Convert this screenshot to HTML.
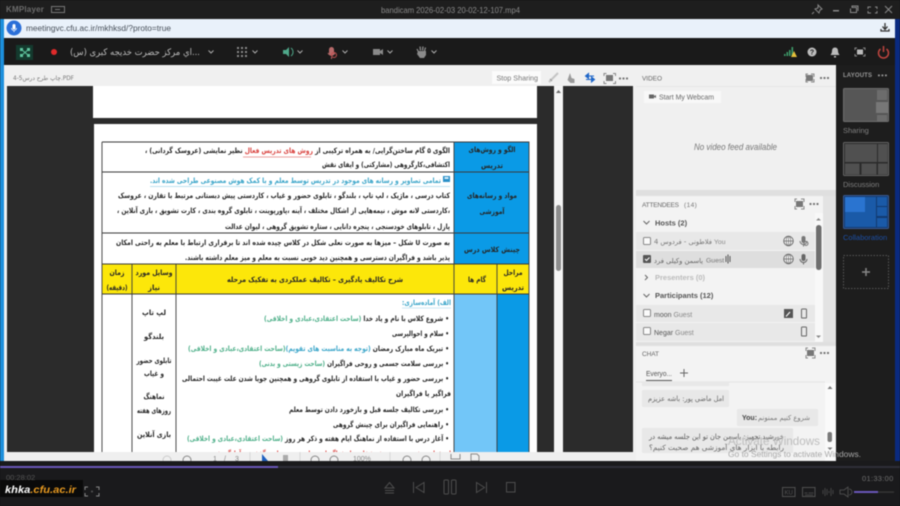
<!DOCTYPE html>
<html><head><meta charset="utf-8"><style>
html,body{margin:0;padding:0;background:#151515;width:900px;height:506px;overflow:hidden}
svg{display:block;filter:blur(.45px)}
text{font-family:"Liberation Sans",sans-serif}
.a{font-family:"DejaVu Sans",sans-serif;direction:rtl;font-size:7.4px;fill:#262626}
.b,.d{font-weight:bold}
.m{text-anchor:middle}
.h{font-size:6.5px;fill:#666}
.g{fill:#4fb08a}.t{fill:#3aa5c9}.r{fill:#d9413d}
.ic{fill:none;stroke:#888;stroke-width:1}
</style></head><body>
<svg width="900" height="506" viewBox="0 0 900 506" xmlns="http://www.w3.org/2000/svg">
<rect width="900" height="506" fill="#1a1a1c"/>
<!-- title bar -->
<rect y="1" width="900" height="18" fill="#1e1e1e"/>
<text x="6" y="12" font-size="8" letter-spacing=".2" style="font-weight:bold" fill="#6c6c6c">KMPlayer</text>
<rect x="51.500" y="6.500" width="13" height="6" fill="none" stroke="#777"/><rect x="55" y="9" width="5" height="1" fill="#777"/>
<text x="381" y="13" font-size="8.500" fill="#8a8a8a" textLength="139" lengthAdjust="spacingAndGlyphs">bandicam 2026-02-03 20-02-12-107.mp4</text>
<path d="M818 5l4 4-2 1-1 3-4-4 3-1zM814 12l-2 2" class="ic" stroke="#777"/>
<rect x="833" y="10" width="6" height="1.500" fill="#888"/>
<path d="M851.500 7.500h5v5h-6v-4M852 7v-1h6v5" class="ic"/>
<path d="M868 9V7h3M875 7h2v2M868 11v2h3M875 13h2v-2" class="ic"/>
<path d="M885 6l7 7M892 6l-7 7" class="ic" stroke="#666"/>
<!-- side strips -->
<rect y="19" width="4" height="442" fill="#1c8fdc"/>
<rect x="895" y="19" width="5" height="442" fill="#0a2a80"/>
<!-- url bar -->
<rect x="4" y="19" width="891" height="19" fill="#e9f1fa"/>
<circle cx="14" cy="28" r="7.500" fill="#2b6fd8"/><rect x="12.500" y="24" width="3" height="5.500" rx="1.500" fill="#fff"/><path d="M11.500 28a2.500 2.500 0 005 0M14 31v1" fill="none" stroke="#fff" stroke-width=".8"/>
<text x="26" y="31" font-size="8" fill="#48505a" textLength="145" lengthAdjust="spacingAndGlyphs">meetingvc.cfu.ac.ir/mkhksd/?proto=true</text>
<path d="M885 23v6M882.500 26.500l2.500 3 2.500-3M881 29v2h8v-2" fill="none" stroke="#333" stroke-width="1.300"/>
<!-- connect bar -->
<rect x="4" y="38" width="891" height="27" fill="#1a1a1a"/>
<rect x="16" y="45" width="17" height="15" fill="#143a2e"/>
<path d="M21 49l8 7M29 49l-8 7" stroke="#5fc49e" stroke-width="1"/><rect x="20" y="48" width="3" height="3" fill="#5fc49e"/><rect x="27" y="48" width="3" height="3" fill="#5fc49e"/><rect x="20" y="54" width="3" height="3" fill="#5fc49e"/><rect x="27" y="54" width="3" height="3" fill="#5fc49e"/>
<circle cx="54" cy="52" r="3" fill="#e02a2a"/>
<text class="a" x="200" y="55" style="font-size:9px;fill:#bdbdbd" textLength="130" lengthAdjust="spacingAndGlyphs">...اي مركز حضرت خديجه كبرى (س)</text>
<g fill="none" stroke="#aaa" stroke-width="1"><path d="M208.500 50.500l2.500 2.500 2.500-2.500M252.500 50.500l2.500 2.500 2.500-2.500M297.500 50.500l2.500 2.500 2.500-2.500M342.500 50.500l2.500 2.500 2.500-2.500M387.500 50.500l2.500 2.500 2.500-2.500M431.500 50.500l2.500 2.500 2.500-2.500"/></g>
<g fill="#8a8a8a"><rect x="237" y="47" width="2" height="2"/><rect x="241" y="47" width="2" height="2"/><rect x="245" y="47" width="2" height="2"/><rect x="237" y="51" width="2" height="2"/><rect x="241" y="51" width="2" height="2"/><rect x="245" y="51" width="2" height="2"/><rect x="237" y="55" width="2" height="2"/><rect x="241" y="55" width="2" height="2"/><rect x="245" y="55" width="2" height="2"/></g>
<path d="M283 50h3l3-3v10l-3-3h-3z" fill="#4fa88a"/><path d="M291 48a5 5 0 010 8" fill="none" stroke="#4fa88a" stroke-width="1"/>
<rect x="329" y="47" width="5" height="9" rx="2.500" fill="#b86a6a"/><path d="M328 53a4 4 0 007 0M331.500 57v2" fill="none" stroke="#b86a6a"/><circle cx="334" cy="55" r="2.500" fill="none" stroke="#c05050"/>
<rect x="373" y="49" width="7" height="6" fill="#8a8a8a"/><path d="M380 51l3-2v6l-3-2z" fill="#8a8a8a"/>
<path d="M418.500 52l-1.500-3M420.500 50.500l-.5-4M422.500 50.500l.5-4M424.500 51l1-3.500" stroke="#8a8a8a" stroke-width="1.300" fill="none"/><path d="M418 51h8v4l-2 3h-4l-3-4z" fill="#8a8a8a"/>
<g fill="#3d9c6a"><rect x="784" y="54" width="1.600" height="2"/><rect x="786.500" y="52" width="1.600" height="4"/><rect x="789" y="50" width="1.600" height="6"/><rect x="791.500" y="47" width="1.600" height="9"/></g><path d="M794 51l3 6h-6z" fill="#e6c03a"/>
<circle cx="812" cy="52" r="4.500" fill="#bdbdbd"/><text x="812" y="54.500" font-size="7" text-anchor="middle" style="font-weight:bold" fill="#1a1a1a">?</text>
<path d="M835 47.500c-2 0-3 1.500-3 3.500 0 2-1 3-1.500 4h9c-.5-1-1.500-2-1.500-4 0-2-1-3.500-3-3.500zM834 56h2v1.500h-2z" fill="#bbb"/>
<rect x="857" y="49.500" width="6" height="5" fill="#bbb"/><path d="M855 50v-2h2M863 48h2v2M855 54v2h2M863 56h2v-2" class="ic" stroke="#bbb"/>
<path d="M880.500 49a5 5 0 106 0M883.500 46v6" fill="none" stroke="#c0453f" stroke-width="1.500"/>
<!-- share pod -->
<rect x="4" y="65" width="632" height="396" fill="#f0f0f0"/>
<text class="a" x="13" y="80" style="font-size:5.800px;fill:#777;direction:ltr" textLength="61" lengthAdjust="spacingAndGlyphs">چاپ طرح درس5-4.PDF</text>
<rect x="492" y="71" width="49" height="13" fill="#fbfbfb"/>
<text x="496.500" y="80.500" font-size="7.200" fill="#777">Stop Sharing</text>
<path d="M549 82l9-9" stroke="#c4c4c4" stroke-width="2"/><path d="M550 79l2 2" stroke="#999"/>
<path d="M570 73l1.500 5 3 1v4h-4l-3-3" fill="#9a9a9a"/>
<path d="M588.500 73.500l-3 2.500 3 2.500zM588 76h6" fill="#1e66c8" stroke="#1e66c8" stroke-width="1.100"/>
<path d="M591.500 77l3 2.500-3 2.500zM592 79.500h-6" fill="#1e66c8" stroke="#1e66c8" stroke-width="1.100"/>
<rect x="606" y="75" width="7" height="6" fill="#777"/><path d="M604 76v-2.500h2.500M613 73.500h2.500V76M604 81v2.500h2.500M613 83.500h2.500V81" class="ic"/>
<g fill="#777"><rect x="619" y="77.500" width="2" height="2"/><rect x="622.500" y="77.500" width="2" height="2"/><rect x="626" y="77.500" width="2" height="2"/></g>
<!-- dark area -->
<rect x="7" y="86" width="626" height="366" fill="#2b2b2b"/>
<rect x="93" y="86" width="444" height="32" fill="#fff"/>
<rect x="94" y="124" width="443" height="328" fill="#fff"/>
<rect x="554" y="86" width="9" height="366" fill="#f4f4f4"/>
<path d="M558.500 90l2.500 3h-5z" fill="#666"/><rect x="556" y="205" width="5" height="66" rx="2.500" fill="#8c8c8c"/>
<!-- doc table fills -->
<rect x="454" y="142" width="75" height="122" fill="#0a9ae6"/>
<rect x="102" y="264" width="427" height="30" fill="#fce70a"/>
<rect x="454" y="294" width="43" height="158" fill="#72c6f8"/>
<rect x="497" y="294" width="32" height="158" fill="#0a9ae6"/>
<g stroke="#3a3a3a" stroke-width=".9" fill="none"><path d="M102 142H529V452M102 142V452M102 172H529M102 233H529M102 264H529M102 294H529M454 142V452M497 264V452M176 264V452M132 264V452"/></g>
<!-- doc text -->
<text class="a d" x="450" y="153" textLength="305" lengthAdjust="spacingAndGlyphs">الگوی ۵ گام ساختن‌گرایی/ به همراه ترکیبی از <tspan class="r">روش های تدریس فعال</tspan> نظیر نمایشی (عروسک گردانی) ،</text>
<path d="M311 157H243" stroke="#d9413d" stroke-width=".6"/>
<text class="a d" x="450" y="167" textLength="128" lengthAdjust="spacingAndGlyphs">اکتشافی،کارگروهی (مشارکتی) و ایفای نقش</text>
<rect x="443" y="176" width="7" height="6" fill="#2a90c8"/><rect x="444.500" y="177" width="4" height="2" fill="#d8eefa"/>
<text class="a d" x="441" y="183" style="fill:#3aa5c9" textLength="291" lengthAdjust="spacingAndGlyphs">تمامی تصاویر و رسانه های موجود در تدریس توسط معلم و با کمک هوش مصنوعی طراحی شده اند.</text>
<path d="M150 186.500H450" stroke="#7cc5e0" stroke-width=".5"/>
<text class="a d" x="450" y="198" textLength="332" lengthAdjust="spacingAndGlyphs">کتاب درسی ، ماژیک ، لپ تاپ ، بلندگو ، تابلوی حضور و غیاب ، کاردستی پیش دبستانی مرتبط با تقارن ، عروسک</text>
<text class="a d" x="450" y="213" textLength="333" lengthAdjust="spacingAndGlyphs">،کاردستی لانه موش ، نیمه‌هایی از اشکال مختلف ، آینه ،پاورپوینت ، تابلوی گروه بندی ، کارت تشویق ، بازی آنلاین ،</text>
<text class="a d" x="450" y="229" textLength="225" lengthAdjust="spacingAndGlyphs">پازل ، تابلوهای خودسنجی ، پنجره دانایی ، ستاره تشویق گروهی ، لیوان عدالت</text>
<text class="a d" x="450" y="245" textLength="334" lengthAdjust="spacingAndGlyphs">به صورت U شکل – میزها به صورت نعلی شکل در کلاس چیده شده اند تا برقراری ارتباط با معلم به راحتی امکان</text>
<text class="a d" x="450" y="260" textLength="265" lengthAdjust="spacingAndGlyphs">پذیر باشد و فراگیران دسترسی و همچنین دید خوبی نسبت به معلم و میز معلم داشته باشند.</text>
<g>
<text class="a b m" x="492" y="152" textLength="47" lengthAdjust="spacingAndGlyphs">الگو و روش‌های</text>
<text class="a b m" x="492" y="168" textLength="22" lengthAdjust="spacingAndGlyphs">تدریس</text>
<text class="a b m" x="492" y="198" textLength="50" lengthAdjust="spacingAndGlyphs">مواد و رسانه‌های</text>
<text class="a b m" x="492" y="214" textLength="25" lengthAdjust="spacingAndGlyphs">آموزشی</text>
<text class="a b m" x="492" y="252" textLength="56" lengthAdjust="spacingAndGlyphs">چینش کلاس درس</text>
<text class="a b m" x="513" y="275" textLength="19" lengthAdjust="spacingAndGlyphs">مراحل</text>
<text class="a b m" x="513" y="290" textLength="22" lengthAdjust="spacingAndGlyphs">تدریس</text>
<text class="a b m" x="477" y="282" textLength="18" lengthAdjust="spacingAndGlyphs">گام ها</text>
<text class="a b m" x="315" y="282" textLength="176" lengthAdjust="spacingAndGlyphs">شرح تکالیف یادگیری – تکالیف عملکردی به تفکیک مرحله</text>
<text class="a b m" x="154" y="275" textLength="37" lengthAdjust="spacingAndGlyphs">وسایل مورد</text>
<text class="a b m" x="154" y="290" textLength="12" lengthAdjust="spacingAndGlyphs">نیاز</text>
<text class="a b m" x="117" y="275" textLength="15" lengthAdjust="spacingAndGlyphs">زمان</text>
<text class="a b m" x="117" y="290" textLength="21" lengthAdjust="spacingAndGlyphs">(دقیقه)</text>
<text class="a b m" x="154" y="315" textLength="24" lengthAdjust="spacingAndGlyphs">لپ تاپ</text>
<text class="a b m" x="154" y="339" textLength="20" lengthAdjust="spacingAndGlyphs">بلندگو</text>
<text class="a b m" x="154" y="363" textLength="35" lengthAdjust="spacingAndGlyphs">تابلوی حضور</text>
<text class="a b m" x="154" y="376" textLength="20" lengthAdjust="spacingAndGlyphs">و غیاب</text>
<text class="a b m" x="154" y="399" textLength="21" lengthAdjust="spacingAndGlyphs">نماهنگ</text>
<text class="a b m" x="154" y="413" textLength="34" lengthAdjust="spacingAndGlyphs">روزهای هفته</text>
<text class="a b m" x="154" y="437" textLength="34" lengthAdjust="spacingAndGlyphs">بازی آنلاین</text>
</g>
<text class="a d" x="451" y="305" style="fill:#3aa5c9" textLength="49" lengthAdjust="spacingAndGlyphs">الف) آماده‌سازی:</text>
<path d="M402 308H451" stroke="#9ad2e6" stroke-width=".5"/>
<text class="a d" x="449" y="321" textLength="185" lengthAdjust="spacingAndGlyphs">• شروع کلاس با نام و یاد خدا <tspan class="g">(ساحت اعتقادی،عبادی و اخلاقی)</tspan></text>
<text class="a d" x="449" y="336" textLength="57" lengthAdjust="spacingAndGlyphs">• سلام و احوالپرسی</text>
<text class="a d" x="449" y="351" textLength="261" lengthAdjust="spacingAndGlyphs">• تبریک ماه مبارک رمضان <tspan class="t">(توجه به مناسبت های تقویم)</tspan><tspan class="g">(ساحت اعتقادی،عبادی و اخلاقی)</tspan></text>
<text class="a d" x="449" y="366" textLength="190" lengthAdjust="spacingAndGlyphs">• بررسی سلامت جسمی و روحی فراگیران <tspan class="g">(ساحت زیستی و بدنی)</tspan></text>
<text class="a d" x="449" y="381" textLength="267" lengthAdjust="spacingAndGlyphs">• بررسی حضور و غیاب با استفاده از تابلوی گروهی و همچنین جویا شدن علت غیبت احتمالی</text>
<text class="a d" x="451" y="396" textLength="55" lengthAdjust="spacingAndGlyphs">فراگیر یا فراگیران</text>
<text class="a d" x="449" y="412" textLength="160" lengthAdjust="spacingAndGlyphs">• بررسی تکالیف جلسه قبل و بازخورد دادن توسط معلم</text>
<text class="a d" x="449" y="427" textLength="116" lengthAdjust="spacingAndGlyphs">• راهنمایی فراگیران برای چینش گروهی</text>
<text class="a d" x="449" y="441" textLength="262" lengthAdjust="spacingAndGlyphs">• آغاز درس با استفاده از نماهنگ ایام هفته و ذکر هر روز <tspan class="g">(ساحت اعتقادی،عبادی و اخلاقی)</tspan></text>
<text class="a d" x="451" y="456" style="fill:#d9413d" textLength="245" lengthAdjust="spacingAndGlyphs">ارزشیابی تشخیصی: پرسش شفاهی از فراگیران درباره مبحث جلسه گذشته و آمادگی ذهنی</text>
<!-- pdf toolbar -->
<rect x="4" y="452" width="632" height="9" fill="#efefef"/>
<g class="ic" fill="none" stroke="#999"><circle cx="167" cy="460" r="4" stroke="#ccc"/><circle cx="187" cy="460" r="4"/><circle cx="315" cy="460" r="4"/><circle cx="334" cy="460" r="4"/><circle cx="407" cy="460" r="4"/><circle cx="426" cy="460" r="4"/><path d="M451 454v5h9v-5M471 454h6l2 2v5h-8z"/></g>
<path d="M250 452v9M300 452v9M390 452v9M440 452v9" stroke="#d8d8d8"/>
<text x="213" y="461" font-size="7" fill="#888">1</text><text x="224" y="461" font-size="7" fill="#888">/</text><text x="235" y="461" font-size="7" fill="#888">3</text>
<path d="M262 454l6 7h-6z" fill="#1d5fbf"/><path d="M283 455h5v6h-5z" fill="#aaa"/>
<text x="353" y="461" font-size="7" fill="#888">100%</text>
<!-- video pod -->
<rect x="636" y="65" width="200" height="125" fill="#f0f0f0"/><rect x="636" y="190" width="200" height="6" fill="#dfdfdf"/>
<path d="M636 86.500H836" stroke="#e6e6e6"/>
<text x="642" y="80.500" class="h" textLength="20" lengthAdjust="spacing">VIDEO</text>
<rect x="806" y="75" width="7" height="6" fill="#777"/><path d="M806 77v-3h2M811 74h3v3M806 79v3h2M811 82h3v-3" class="ic"/>
<g fill="#777"><rect x="820" y="77" width="2" height="2"/><rect x="823.500" y="77" width="2" height="2"/><rect x="827" y="77" width="2" height="2"/></g>
<rect x="644" y="91" width="77" height="12" fill="#f8f8f8"/>
<rect x="649" y="94.500" width="5" height="4" fill="#666"/><path d="M654 96l2-1v3l-2-1z" fill="#666"/>
<text x="659" y="99.500" font-size="7.300" fill="#666" textLength="55" lengthAdjust="spacingAndGlyphs">Start My Webcam</text>
<text x="694" y="150" font-size="8.800" font-style="italic" fill="#777" textLength="83" lengthAdjust="spacingAndGlyphs">No video feed available</text>
<!-- attendees pod -->
<rect x="636" y="196" width="187" height="146" fill="#f3f3f3"/>
<rect x="823" y="196" width="13" height="146" fill="#e3e3e3"/><rect x="636" y="342" width="200" height="4" fill="#dfdfdf"/>
<rect x="636" y="232" width="180" height="18" fill="#e8e8e8"/>
<rect x="636" y="251" width="180" height="17" fill="#dedede"/>
<rect x="636" y="305" width="180" height="17" fill="#e8e8e8"/>
<rect x="636" y="323" width="180" height="18" fill="#e8e8e8"/>
<rect x="815" y="213" width="8" height="129" fill="#f8f8f8"/>
<rect x="816" y="225" width="5.500" height="45" rx="2.700" fill="#6e6e6e"/>
<path d="M818.500 218l2.500 2.500h-5zM818.500 338l2.500-2.500h-5z" fill="#888"/>
<text x="642" y="207" class="h" textLength="37" lengthAdjust="spacing">ATTENDEES</text><text x="684" y="207" font-size="6.500" letter-spacing=".4" fill="#777">(14)</text>
<rect x="796" y="201" width="7" height="6" fill="#777"/><path d="M795 202v-3h2M801 199h3v3M795 206v3h2M801 209h3v-3" class="ic"/>
<g fill="#777"><rect x="809.500" y="203" width="2" height="2"/><rect x="813" y="203" width="2" height="2"/><rect x="816.500" y="203" width="2" height="2"/></g>
<path d="M643.500 221l3 3 3-3M643.500 294l3 3 3-3" fill="none" stroke="#666" stroke-width="1"/>
<path d="M645 275l2.500 2.500-2.500 2.500" fill="none" stroke="#666" stroke-width="1"/>
<text x="655" y="225.500" font-size="7.500" style="font-weight:bold" fill="#555">Hosts (2)</text>
<text x="655" y="280" font-size="7.500" style="font-weight:bold" fill="#bbb">Presenters (0)</text>
<text x="655" y="298" font-size="7.500" style="font-weight:bold" fill="#555">Participants (12)</text>
<rect x="643.500" y="237.500" width="7" height="7" rx="1" fill="#fafafa" stroke="#888"/>
<rect x="643" y="255" width="8" height="8" rx="1" fill="#555"/><path d="M645 259l1.500 1.500 3-3" stroke="#fff" fill="none"/>
<rect x="643.500" y="309.500" width="7" height="7" rx="1" fill="#fafafa" stroke="#888"/>
<rect x="643.500" y="327.500" width="7" height="7" rx="1" fill="#fafafa" stroke="#888"/>
<text class="a" x="712" y="244" style="font-size:6.800px;fill:#777" textLength="58" lengthAdjust="spacingAndGlyphs">فلاطونی - فردوس 4</text>
<text x="714" y="244" font-size="6.800" fill="#888">You</text>
<text class="a" x="703" y="263" style="font-size:6.800px;fill:#666" textLength="49" lengthAdjust="spacingAndGlyphs">یاسمن وکیلی فرد</text>
<text x="706" y="262.500" font-size="6.800" fill="#777">Guest</text>
<path d="M726 256v6M728 254.500v9M730 256v6" stroke="#555" stroke-width="1"/>
<text x="654" y="317" font-size="7" fill="#555">moon <tspan fill="#888">Guest</tspan></text>
<text x="654" y="335" font-size="7" fill="#555">Negar <tspan fill="#888">Guest</tspan></text>
<circle cx="788.500" cy="241" r="4.700" fill="#fff" stroke="#666"/><path d="M784 241h9M788.500 236v10" stroke="#666" stroke-width=".7"/><ellipse cx="788.500" cy="241" rx="2.300" ry="4.700" fill="none" stroke="#666" stroke-width=".7"/>
<circle cx="788.500" cy="259" r="4.700" fill="#fff" stroke="#666"/><path d="M784 259h9M788.500 254v10" stroke="#666" stroke-width=".7"/><ellipse cx="788.500" cy="259" rx="2.300" ry="4.700" fill="none" stroke="#666" stroke-width=".7"/>
<rect x="801.500" y="236" width="4" height="7" rx="2" fill="#777"/><path d="M800 241a3.500 3.500 0 007 0M803.500 245v1.500" fill="none" stroke="#777"/><circle cx="806" cy="243.500" r="2" fill="none" stroke="#777"/>
<rect x="801.500" y="254" width="4" height="7" rx="2" fill="#666"/><path d="M800 259a3.500 3.500 0 007 0M803.500 263v1.500" fill="none" stroke="#666"/>
<rect x="784" y="309" width="9" height="9" fill="#555"/><path d="M786 316.500l4-4.500" stroke="#fff" stroke-width="1.100"/>
<rect x="801.500" y="309" width="5" height="9" rx=".8" fill="none" stroke="#666"/>
<rect x="801.500" y="327" width="5" height="9" rx=".8" fill="none" stroke="#666"/>
<!-- chat pod -->
<rect x="636" y="346" width="200" height="115" fill="#f3f3f3"/>
<rect x="825" y="383" width="10" height="78" fill="#fafafa"/>
<path d="M830 386l2.500 3h-5zM830 450l2.500-2.500h-5z" fill="#777"/><rect x="827.500" y="432" width="4.500" height="10" rx="2" fill="#7a7a7a"/>
<text x="642" y="356" class="h" textLength="17" lengthAdjust="spacing">CHAT</text>
<rect x="807" y="350" width="7" height="6" fill="#777"/><path d="M806 351v-3h2M812 348h3v3M806 355v3h2M812 358h3v-3" class="ic"/>
<g fill="#777"><rect x="820" y="352" width="2" height="2"/><rect x="823.500" y="352" width="2" height="2"/><rect x="827" y="352" width="2" height="2"/></g>
<text x="646" y="376" font-size="7.500" fill="#555" textLength="26" lengthAdjust="spacingAndGlyphs">Everyo...</text>
<path d="M646 380.500h26" stroke="#555" stroke-width="1"/>
<path d="M684 369v8M680 373h8" stroke="#666" stroke-width="1"/>
<path d="M636 382H825" stroke="#e3e3e3"/>
<rect x="642" y="382" width="87" height="4" fill="#e8e8e8"/>
<rect x="642" y="390" width="87" height="17" rx="1" fill="#e8e8e8"/>
<rect x="737" y="409" width="81" height="17" rx="1" fill="#e8e8e8"/>
<rect x="642" y="428" width="151" height="25" rx="1" fill="#e8e8e8"/>
<text class="a" x="724" y="401" style="font-size:7px;fill:#666" textLength="76" lengthAdjust="spacingAndGlyphs">امل ماضی پور: باشه عزیزم</text>
<text x="742" y="420" font-size="7" style="font-weight:bold" fill="#444">You:</text>
<text class="a" x="810" y="420" style="font-size:6.800px;fill:#777" textLength="52" lengthAdjust="spacingAndGlyphs">شروع کنیم ممنونم</text>
<text class="a" x="784" y="439" style="font-size:7px;fill:#555" textLength="135" lengthAdjust="spacingAndGlyphs">خورشید تجهیز: یاسمن جان تو این جلسه میشه در</text>
<text class="a" x="784" y="450" style="font-size:7px;fill:#666" textLength="135" lengthAdjust="spacingAndGlyphs">رابطه با ابزار های آموزشی هم صحبت کنیم؟</text>
<!-- layouts -->
<rect x="836" y="65" width="59" height="396" fill="#1d1d1d"/>
<text x="843" y="77" class="h" style="fill:#999;font-weight:bold;font-size:6px" textLength="29" lengthAdjust="spacing">LAYOUTS</text>
<g fill="#999"><rect x="878" y="74.500" width="1.800" height="1.800"/><rect x="881.500" y="74.500" width="1.800" height="1.800"/><rect x="885" y="74.500" width="1.800" height="1.800"/></g>
<rect x="843.500" y="88.500" width="45" height="33" rx="1" fill="#565656" stroke="#6e6e6e"/>
<rect x="877" y="90" width="10" height="10" fill="#6c6c6c"/><rect x="876" y="102" width="12" height="11" fill="#777"/><rect x="877" y="115" width="10" height="6" fill="#6c6c6c"/>
<text x="843" y="133" font-size="7.500" fill="#808080">Sharing</text>
<rect x="843.500" y="142.500" width="45" height="33" rx="1" fill="#2a2a2a" stroke="#666"/>
<g fill="#505050"><rect x="845" y="144" width="32" height="18"/><rect x="878" y="144" width="9.500" height="18"/><rect x="845" y="163.500" width="14.500" height="11"/><rect x="861.500" y="163.500" width="15" height="11"/><rect x="878" y="163.500" width="9.500" height="11"/></g>
<text x="843" y="187" font-size="7.500" fill="#808080">Discussion</text>
<rect x="843.500" y="195.500" width="45" height="33" rx="1" fill="#123a70" stroke="#3a5a90"/>
<g fill="#1a5aa8"><rect x="845" y="197" width="31" height="30"/><rect x="877" y="197" width="10" height="9"/><rect x="877" y="207" width="10" height="9"/><rect x="877" y="218" width="10" height="9"/></g>
<rect x="845" y="197" width="20" height="15" fill="#2a74d0"/>
<text x="843" y="240" font-size="7.500" fill="#1c4fa5">Collaboration</text>
<rect x="843.500" y="255.500" width="45" height="33" fill="none" stroke="#555" stroke-dasharray="1.500 1.500"/>
<path d="M866 268v8M862 272h8" stroke="#888" stroke-width="1.500"/>
<!-- windows watermark -->
<text x="728" y="445" font-size="12" fill="#bdbdbd" textLength="92" lengthAdjust="spacingAndGlyphs">Activate Windows</text>
<text x="728" y="457" font-size="7.800" fill="#a8a8a8" textLength="133" lengthAdjust="spacingAndGlyphs">Go to Settings to activate Windows.</text>
<!-- kmplayer bottom -->
<rect y="461" width="900" height="45" fill="#1a1a1c"/>
<rect y="466" width="900" height="2" fill="#2e2f38"/>
<rect y="466" width="278" height="2" fill="#6a57b8"/>
<text x="6" y="480" font-size="7.500" fill="#555">00:28:02</text>
<rect y="480" width="83" height="17" fill="#0a0a0a"/>
<text x="5" y="493" font-size="10" font-style="italic" style="font-weight:bold" fill="#fff" textLength="71" lengthAdjust="spacingAndGlyphs">khka<tspan fill="#e89a20">.cfu.ac.ir</tspan></text>
<path d="M85 490v-3h3M96 487h3v3M85 493v3h3M96 496h3v-3" class="ic" stroke="#555"/><circle cx="92" cy="491.500" r="1" fill="#555"/>
<g fill="none" stroke="#4e4e4e" stroke-width="1"><path d="M385 488l4.500-5.500 4.500 5.500zM385 490.500h9M385 493h9"/>
<path d="M413.500 482v11M424 482.500l-8 5 8 5z"/>
<rect x="444" y="480" width="4.500" height="14" rx="1"/><rect x="451.500" y="480" width="4.500" height="14" rx="1"/>
<path d="M476.500 482.500l8 5-8 5zM486.500 482v11"/>
<rect x="506.500" y="482.500" width="8.500" height="9.500"/></g>
<text x="862" y="481" font-size="7.500" letter-spacing=".3" fill="#6f6f6f">01:33:00</text>
<rect x="782.500" y="487.500" width="12.500" height="9" fill="none" stroke="#505050"/><text x="784.500" y="494.500" font-size="6" fill="#555">KU</text>
<rect x="802.500" y="487.500" width="12.500" height="9" fill="none" stroke="#505050"/><path d="M804.500 493h3M808.500 493h5M805 495h8" stroke="#505050" stroke-width=".7"/>
<path d="M823 490v4M825 488v8M827 489v6M829 491v2M831 488v8M833 490v4" stroke="#555" stroke-width=".7"/>
<path d="M840 490h4l4-3v10l-4-3h-4zM849 489a3 3 0 010 6" fill="none" stroke="#555" stroke-width=".8"/>
<rect x="854" y="491.500" width="40" height="1.200" fill="#3a3a3a"/>
<rect x="854" y="491" width="24" height="2" fill="#6a57b8"/>
</svg>
</body></html>
